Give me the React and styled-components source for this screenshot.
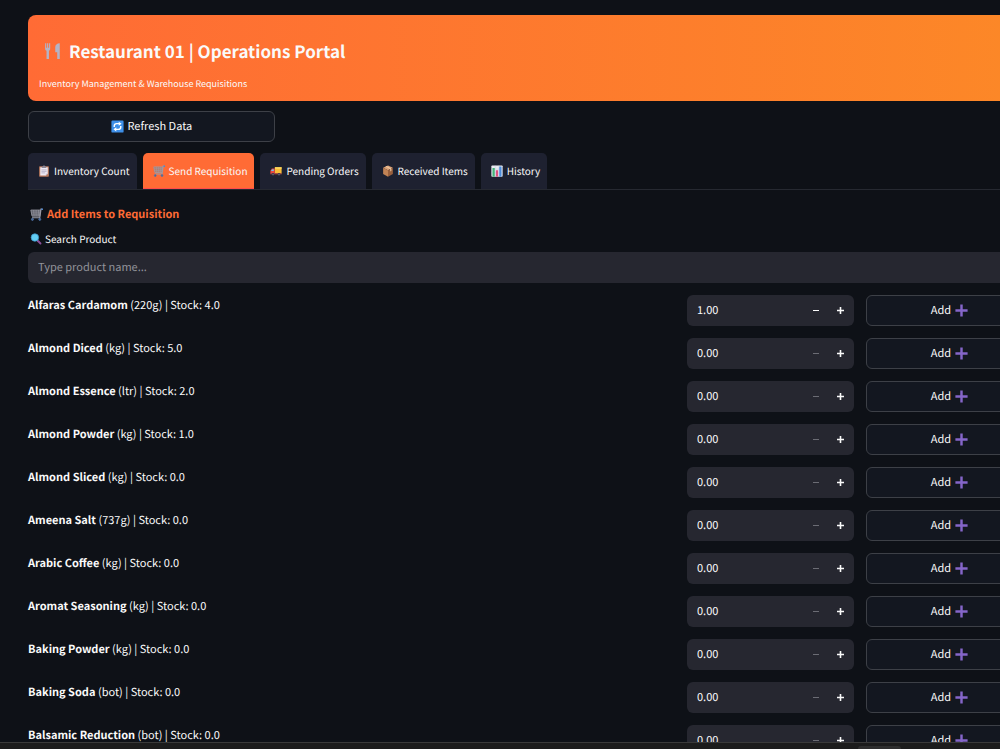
import React, { useState } from 'react';
import styled, { createGlobalStyle } from 'styled-components';

const TABS = [
  { id: 'inventory', label: 'Inventory Count', icon: 'clipboard' },
  { id: 'send', label: 'Send Requisition', icon: 'cart' },
  { id: 'pending', label: 'Pending Orders', icon: 'truck' },
  { id: 'received', label: 'Received Items', icon: 'box' },
  { id: 'history', label: 'History', icon: 'chart' },
];

const PRODUCTS = [
  { name: 'Alfaras Cardamom', unit: '220g', stock: '4.0', qty: 1 },
  { name: 'Almond Diced', unit: 'kg', stock: '5.0', qty: 0 },
  { name: 'Almond Essence', unit: 'ltr', stock: '2.0', qty: 0 },
  { name: 'Almond Powder', unit: 'kg', stock: '1.0', qty: 0 },
  { name: 'Almond Sliced', unit: 'kg', stock: '0.0', qty: 0 },
  { name: 'Ameena Salt', unit: '737g', stock: '0.0', qty: 0 },
  { name: 'Arabic Coffee', unit: 'kg', stock: '0.0', qty: 0 },
  { name: 'Aromat Seasoning', unit: 'kg', stock: '0.0', qty: 0 },
  { name: 'Baking Powder', unit: 'kg', stock: '0.0', qty: 0 },
  { name: 'Baking Soda', unit: 'bot', stock: '0.0', qty: 0 },
  { name: 'Balsamic Reduction', unit: 'bot', stock: '0.0', qty: 0 },
];

const ICONS = {
  cutlery: (
    <g fill="#b4b3c6">
      <path d="M2 2h2v8h1.500V2h2v8H9V2h2v10c0 2-1 3-2.200 3.500V30H4.500V15.500C3 15 2 14 2 12z" />
      <path d="M28 2v28h-4.500V18H20V9c0-4 3-7 8-7z" />
    </g>
  ),
  refresh: (
    <g>
      <rect x="1" y="1" width="30" height="30" rx="3" fill="#3e8fe8" />
      <path
        d="M8 17v-2c0-4 3-6 6-6h7M24 15v2c0 4-3 6-6 6h-7"
        fill="none"
        stroke="#fff"
        strokeWidth="3.500"
      />
      <path d="M19 4l7 5-7 5zM13 18l-7 5 7 5z" fill="#fff" />
    </g>
  ),
  clipboard: (
    <g>
      <rect x="3" y="3" width="26" height="28" rx="2" fill="#b9785c" />
      <path d="M6 6h20v17l-5 5H6z" fill="#eee9f3" />
      <path d="M21 28v-5h5z" fill="#b5b1c4" />
      <path d="M10 8V4h3c0-4 6-4 6 0h3v4z" fill="#8a8797" />
      <path d="M9 13h14M9 17h14M9 21h10" stroke="#9a94b0" strokeWidth="1.500" />
    </g>
  ),
  cart: (
    <g fill="none" stroke="#9c9ca8" strokeWidth="2">
      <path d="M30 3h-3l-3 21H5" strokeWidth="3" />
      <path d="M2 5h24l-2 15H5z" fill="#85858f" fillOpacity=".6" />
      <path d="M3 10h22M4 15h21M9 5l1 15M15 5v15M21 5l-1 15" strokeWidth="1.500" />
      <path d="M28 3h4" stroke="#4d87cf" strokeWidth="4" />
      <circle cx="6" cy="28" r="2.500" fill="#51688d" stroke="#4d75ae" />
      <circle cx="24" cy="28" r="2.500" fill="#51688d" stroke="#4d75ae" />
    </g>
  ),
  truck: (
    <g>
      <path d="M13 6h18v17H13z" fill="#f9bd38" />
      <path d="M13 6h18v4H13z" fill="#ffdb62" />
      <path d="M1 23v-8l4-6h8v14z" fill="#e8483f" />
      <path d="M3 15l3-4h4v5H3z" fill="#74c4ee" />
      <path d="M1 22h30v3H1z" fill="#a64242" />
      <circle cx="8" cy="25" r="3.500" fill="#39394a" />
      <circle cx="24" cy="25" r="3.500" fill="#39394a" />
      <circle cx="8" cy="25" r="1.300" fill="#c8c8d0" />
      <circle cx="24" cy="25" r="1.300" fill="#c8c8d0" />
    </g>
  ),
  box: (
    <g>
      <path d="M16 1l13 6-13 7L3 7z" fill="#dca377" />
      <path d="M3 7l13 7v17L3 24z" fill="#c18355" />
      <path d="M29 7l-13 7v17l13-7z" fill="#99603d" />
      <path d="M9 4l13 7v6l3-1.500V9L12 2.500z" fill="#ebc6a0" />
    </g>
  ),
  chart: (
    <g>
      <rect x="1" y="1" width="30" height="30" rx="2" fill="#e9ebf2" />
      <path d="M1 11h30M1 21h30M11 1v30M21 1v30" stroke="#bcc4d6" />
      <path d="M4 8h6v23H4z" fill="#42b577" />
      <path d="M13 14h6v17h-6z" fill="#dd5281" />
      <path d="M22 4h6v27h-6z" fill="#4b8ddd" />
    </g>
  ),
  search: (
    <g>
      <path d="M20 20l8 8" stroke="#8a4f99" strokeWidth="5" strokeLinecap="round" />
      <circle cx="13" cy="12" r="10" fill="#62cdf2" stroke="#3c94c8" strokeWidth="2" />
    </g>
  ),
  plus: <path d="M13 1h6v12h12v6H19v12h-6V19H1v-6h12z" fill="#8566c9" />,
};

const Icon = ({ name, size = 12 }) => (
  <IconSvg viewBox="0 0 32 32" width={size} height={size} aria-hidden="true">
    {ICONS[name]}
  </IconSvg>
);

const ProductRow = ({ product }) => {
  const [value, setValue] = useState(product.qty.toFixed(2));
  const amount = Number(value) || 0;

  const step = diff => setValue(Math.max(0, amount + diff).toFixed(2));

  return (
    <Row>
      <ProductName>
        <strong>{product.name}</strong> ({product.unit}) | Stock: {product.stock}
      </ProductName>
      <Stepper>
        <QuantityInput
          inputMode="decimal"
          aria-label={`${product.name} quantity`}
          value={value}
          onChange={e => setValue(e.target.value)}
        />
        <StepButton
          type="button"
          aria-label="Decrease"
          disabled={amount <= 0}
          onClick={() => step(-1)}
        >
          <svg viewBox="0 0 8 8" width="8" height="8">
            <path d="M1 3.500h6" stroke="currentColor" strokeWidth="1.200" />
          </svg>
        </StepButton>
        <StepButton type="button" aria-label="Increase" onClick={() => step(1)}>
          <svg viewBox="0 0 8 8" width="8" height="8">
            <path d="M0 3.500h7M3.500 0v7" stroke="currentColor" strokeWidth="1.600" />
          </svg>
        </StepButton>
      </Stepper>
      <OutlineButton type="button">
        Add <Icon name="plus" size={13} />
      </OutlineButton>
    </Row>
  );
};

const App = () => {
  const [activeTab, setActiveTab] = useState('send');
  const [search, setSearch] = useState('');

  const products = PRODUCTS.filter(({ name }) =>
    name.toLowerCase().includes(search.toLowerCase())
  );

  return (
    <Page>
      <GlobalStyle />
      <Main>
        <Banner>
          <Title>
            <Icon name="cutlery" size={18} />
            Restaurant 01 | Operations Portal
          </Title>
          <Subtitle>Inventory Management &amp; Warehouse Requisitions</Subtitle>
        </Banner>

        <Actions>
          <OutlineButton type="button">
            <Icon name="refresh" size={13} /> Refresh Data
          </OutlineButton>
        </Actions>

        <TabList role="tablist">
          {TABS.map(({ id, label, icon }) => (
            <Tab
              key={id}
              type="button"
              role="tab"
              aria-selected={id === activeTab}
              $active={id === activeTab}
              onClick={() => setActiveTab(id)}
            >
              <Icon name={icon} />
              {label}
            </Tab>
          ))}
        </TabList>

        <SectionTitle>
          <Icon name="cart" size={13} />
          Add Items to Requisition
        </SectionTitle>
        <SearchLabel htmlFor="search">
          <Icon name="search" />
          Search Product
        </SearchLabel>
        <SearchInput
          id="search"
          placeholder="Type product name..."
          value={search}
          onChange={e => setSearch(e.target.value)}
        />

        <ProductList>
          {products.map(product => (
            <ProductRow key={product.name} product={product} />
          ))}
        </ProductList>
      </Main>
      <BottomBar>
        <BottomHandle />
      </BottomBar>
    </Page>
  );
};

const GlobalStyle = createGlobalStyle`
  * {
    box-sizing: border-box;
  }

  body {
    margin: 0;
    background-color: #0e1117;
  }

  body,
  button,
  input {
    font-family: 'Source Sans Pro', 'Noto Sans CJK SC', sans-serif;
    font-size: 11px;
    line-height: 16px;
    color: #fafafa;
    text-rendering: geometricPrecision;
  }
`;

const Page = styled.div`
  height: 100vh;
  overflow: hidden;
`;

/* the content runs past the right edge of the window */
const Main = styled.main`
  display: flex;
  flex-direction: column;
  margin: 15px -33px 0 28px;
`;

const IconSvg = styled.svg`
  flex-shrink: 0;
`;

const Banner = styled.header`
  display: flex;
  flex-direction: column;
  gap: 13px;
  padding: 24px 11px 9px;
  border-radius: 8px;
  background: linear-gradient(90deg, #ff6b35 0%, #fc8827 100%);
`;

const Title = styled.h1`
  display: flex;
  align-items: center;
  gap: 7px;
  margin: 0;
  padding-left: 5px;
  font-size: 17px;
  font-weight: bold;
  line-height: 24px;
`;

const Subtitle = styled.p`
  margin: 0;
  font-size: 9px;
`;

const Actions = styled.div`
  display: grid;
  grid-template-columns: repeat(4, 1fr);
  gap: 6px;
  margin-top: 10px;
`;

const OutlineButton = styled.button`
  display: flex;
  align-items: center;
  justify-content: center;
  gap: 4px;
  height: 31px;
  padding: 0 10px 1px;
  border: 1px solid #3d4047;
  border-radius: 6px;
  background-color: #131720;
  cursor: pointer;

  &:hover {
    border-color: #ff4b4b;
  }
`;

const TabList = styled.div`
  display: flex;
  gap: 6px;
  margin-top: 11px;
  border-bottom: 1px solid #262931;
`;

const Tab = styled.button`
  display: flex;
  align-items: center;
  gap: 4px;
  height: 36px;
  padding: 0 7px 0 10px;
  border: none;
  border-bottom: 1px solid ${props => (props.$active ? '#ff4b4b' : '#1e2130')};
  border-radius: 5px 5px 0 0;
  background-color: ${props => (props.$active ? '#ff6b35' : '#1e2130')};
  font-size: 10px;
  cursor: pointer;
`;

const SectionTitle = styled.h2`
  display: flex;
  align-items: center;
  gap: 4px;
  margin: 16px 0 0;
  padding-left: 2px;
  font-size: 11px;
  font-weight: bold;
  color: #ff6b35;
`;

const SearchLabel = styled.label`
  display: flex;
  align-items: center;
  gap: 3px;
  margin-top: 9px;
  padding-left: 2px;
  font-size: 10px;
`;

const SearchInput = styled.input`
  height: 31px;
  margin-top: 5px;
  padding: 0 10px 2px;
  border: none;
  border-radius: 6px;
  background-color: #262730;

  &::placeholder {
    color: #92939a;
    opacity: 1;
  }
`;

const ProductList = styled.div`
  display: flex;
  flex-direction: column;
  gap: 12px;
  margin-top: 12px;
`;

const Row = styled.div`
  display: grid;
  grid-template-columns: 1fr 167px 167px;
  gap: 12px;
`;

const ProductName = styled.p`
  margin: 2px 0 0;
`;

const Stepper = styled.div`
  display: flex;
  height: 31px;
  padding-right: 1px;
  border-radius: 6px;
  background-color: #262730;
  overflow: hidden;
`;

const QuantityInput = styled.input`
  flex: 1;
  min-width: 0;
  padding: 0 10px 1px;
  border: none;
  background-color: transparent;
`;

const StepButton = styled.button`
  display: flex;
  align-items: center;
  justify-content: center;
  width: 25px;
  padding: 0;
  border: none;
  background-color: transparent;
  cursor: pointer;

  &:disabled {
    color: #6b6c74;
    cursor: default;
  }
`;

const BottomBar = styled.div`
  position: fixed;
  right: 0;
  bottom: 0;
  left: 0;
  display: flex;
  justify-content: flex-end;
  align-items: flex-end;
  height: 7px;
  padding-right: 99px;
  border-top: 1px solid #3a3a3a;
  background-color: #1c1c1c;
`;

const BottomHandle = styled.div`
  width: 43px;
  height: 3px;
  border-radius: 3px 3px 0 0;
  background-color: #2e2e2e;
`;

export default App;
